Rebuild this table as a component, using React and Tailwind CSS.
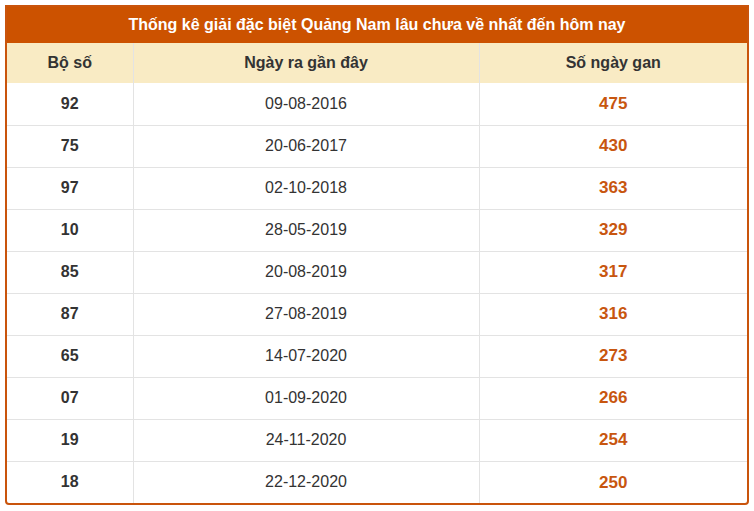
const rows = [
  ["92", "09-08-2016", "475"],
  ["75", "20-06-2017", "430"],
  ["97", "02-10-2018", "363"],
  ["10", "28-05-2019", "329"],
  ["85", "20-08-2019", "317"],
  ["87", "27-08-2019", "316"],
  ["65", "14-07-2020", "273"],
  ["07", "01-09-2020", "266"],
  ["19", "24-11-2020", "254"],
  ["18", "22-12-2020", "250"]
];

export default function App() {
  return (
    <div className="w-[754px] h-[511px] bg-white pt-[5px] px-[5px] font-['Liberation_Sans',Arial,sans-serif]">
      <div className="w-[744px] border-2 border-[#c9540c] rounded-b-[4px] overflow-hidden">
        <div className="h-[36px] bg-[#cc5200] text-white font-bold text-[16px] flex items-center justify-center">
          Thống kê giải đặc biệt Quảng Nam lâu chưa về nhất đến hôm nay
        </div>
        <table className="w-full border-collapse text-[16px] text-[#333]">
          <thead>
            <tr className="h-[40px] bg-[#f9ebc4] font-bold">
              <th className="w-[126px] border-r border-[#e3e3e3] font-bold">Bộ số</th>
              <th className="w-[346px] border-r border-[#e3e3e3] font-bold">Ngày ra gần đây</th>
              <th className="font-bold">Số ngày gan</th>
            </tr>
          </thead>
          <tbody>
            {rows.map(([so, ngay, gan], i) => (
              <tr key={so} className={"h-[42px] " + (i > 0 ? "border-t border-[#e3e3e3]" : "")}>
                <td className="text-center font-bold border-r border-[#e3e3e3]">{so}</td>
                <td className="text-center border-r border-[#e3e3e3]">{ngay}</td>
                <td className="text-center font-bold text-[17px] text-[#c8560f]">{gan}</td>
              </tr>
            ))}
          </tbody>
        </table>
      </div>
    </div>
  );
}
